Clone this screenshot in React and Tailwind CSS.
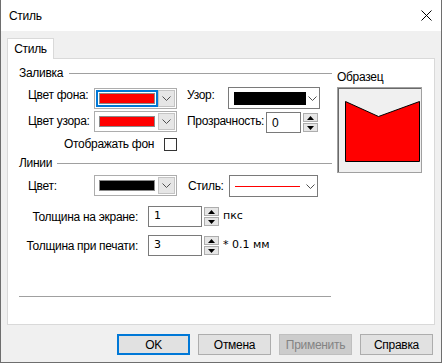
import React from "react";

const font = { fontFamily: '"Liberation Sans", Arial, sans-serif' };
const tahoma = { fontFamily: '"DejaVu Sans", sans-serif' };

function Chevron({ className = "" }) {
  return (
    <svg width="9" height="5" viewBox="0 0 9 5" className={className}>
      <path d="M0.5 0.5 L4.5 4.5 L8.5 0.5" fill="none" stroke="#505050" strokeWidth="1" />
    </svg>
  );
}

function ColorCombo({ color, focused }) {
  return (
    <div className="flex h-[21px] w-[83px] flex-none border border-[#adadad] bg-white p-[1px]">
      <div
        className={
          focused
            ? "flex-1 border-2 border-[#0078d7] p-[1px]"
            : "flex-1 p-[3px]"
        }
      >
        <div className="h-full w-full border border-[#8a8a8a]" style={{ background: color }} />
      </div>
      <div className="flex w-[17px] flex-none items-center justify-center border border-[#c4c4c4] bg-[#e6e6e6]">
        <Chevron />
      </div>
    </div>
  );
}

function FlatCombo({ width, children }) {
  return (
    <div className="flex h-[22px] flex-none items-center border border-[#7a7a7a] bg-white pl-[5px] pr-[2px]" style={{ width }}>
      <div className="flex-none">{children}</div>
      <Chevron className="ml-auto flex-none" />
    </div>
  );
}

function Spin({ value, width = 54, editW = 36, small }) {
  return (
    <div className="flex h-[21px] flex-none" style={{ width }}>
      <div
        className="flex flex-none items-center border border-[#7a7a7a] bg-white pl-[5px] text-black"
        style={{ width: editW, ...(small ? tahoma : {}), fontSize: small ? 11 : 12 }}
      >
        {value}
      </div>
      <div className="ml-[2px] flex w-[15px] flex-col gap-[1px] py-[1px]">
        <div className="flex flex-1 items-center justify-center border border-[#adadad] bg-[#e6e6e6]">
          <svg width="7" height="4" viewBox="0 0 7 4"><path d="M0 4 L3.5 0 L7 4 Z" fill="#000" /></svg>
        </div>
        <div className="flex flex-1 items-center justify-center border border-[#adadad] bg-[#e6e6e6]">
          <svg width="7" height="4" viewBox="0 0 7 4"><path d="M0 0 L3.5 4 L7 0 Z" fill="#000" /></svg>
        </div>
      </div>
    </div>
  );
}

function Header({ text, lineStart }) {
  return (
    <div className="flex h-[16px] items-center pl-[11px]">
      <span className="whitespace-nowrap leading-[16px]">{text}</span>
      <div className="h-px flex-1 bg-[#a0a0a0]" style={{ marginLeft: lineStart }} />
    </div>
  );
}

function Button({ children, primary, disabled }) {
  let cls = "flex h-[21px] w-[73px] items-center justify-center border text-[12px] ";
  if (primary) cls += "border-2 border-[#0078d7] bg-[#e1e1e1] text-black";
  else if (disabled) cls += "border-[#bfbfbf] bg-[#cccccc] text-[#838383]";
  else cls += "border-[#adadad] bg-[#e1e1e1] text-black";
  return <div className={cls}>{children}</div>;
}

export default function App() {
  return (
    <div className="flex h-[363px] w-[442px] flex-col whitespace-nowrap border-x border-b border-[#6e6e6e] bg-[#f0f0f0] text-[12px] tracking-[-0.3px] text-black" style={font}>
      <div className="flex h-[31px] flex-none items-center justify-between bg-white pl-[8px] pr-[9px]">
        <span>Стиль</span>
        <svg width="11" height="11" viewBox="0 0 11 11">
          <path d="M0.5 0.5 L10.5 10.5 M10.5 0.5 L0.5 10.5" stroke="#000" strokeWidth="1" />
        </svg>
      </div>

      <div className="flex flex-1 flex-col px-[6px] pt-[7px]">
        <div className="relative z-10 -mb-px flex h-[21px] w-[47px] items-center justify-center border border-b-0 border-[#d9d9d9] bg-white">
          Стиль
        </div>
        <div className="flex h-[267px] border border-[#d9d9d9] bg-white">
          <div className="flex w-[324px] flex-none flex-col pt-[6px]">
            <Header text="Заливка" lineStart={6} />

            <div className="mt-[6px] flex h-[22px] pl-[20px]">
              <span className="w-[66px] flex-none leading-[16px]">Цвет фона:</span>
              <div className="mt-[1px]"><ColorCombo color="#ff0000" focused /></div>
              <span className="ml-[10px] w-[41px] flex-none leading-[16px]">Узор:</span>
              <FlatCombo width={92}>
                <div className="h-[13px] w-[72px] bg-black" />
              </FlatCombo>
            </div>

            <div className="mt-[2px] flex h-[22px] pl-[20px]">
              <span className="mt-[2px] w-[66px] flex-none leading-[16px]">Цвет узора:</span>
              <ColorCombo color="#ff0000" />
              <span className="ml-[10px] mt-[2px] w-[79px] flex-none leading-[16px]">Прозрачность:</span>
              <div className="mt-[1px]"><Spin value="0" width={52} editW={35} /></div>
            </div>

            <div className="mt-[4px] flex h-[14px] items-center pl-[56px]">
              <span className="leading-[16px]">Отображать фон</span>
              <div className="ml-auto mr-[155px] h-[13px] w-[13px] border border-[#333333] bg-white" />
            </div>

            <div className="mt-[4px]">
              <Header text="Линии" lineStart={5} />
            </div>

            <div className="mt-[4px] flex h-[23px] pl-[20px]">
              <span className="mt-[3px] w-[66px] flex-none leading-[16px]">Цвет:</span>
              <ColorCombo color="#000000" />
              <span className="ml-[11px] mt-[3px] w-[41px] flex-none leading-[16px]">Стиль:</span>
              <FlatCombo width={89}>
                <div className="h-px w-[65px] bg-[#ff0000]" />
              </FlatCombo>
            </div>

            <div className="mt-[8px] flex h-[21px] items-center">
              <span className="w-[130px] flex-none text-right leading-[16px]">Толщина на экране:</span>
              <div className="ml-[10px]"><Spin value="1" width={71} editW={54} small /></div>
              <span className="ml-[4px] text-[11px] tracking-normal" style={tahoma}>пкс</span>
            </div>

            <div className="mt-[8px] flex h-[21px] items-center">
              <span className="w-[130px] flex-none text-right leading-[16px]">Толщина при печати:</span>
              <div className="ml-[10px]"><Spin value="3" width={71} editW={54} small /></div>
              <span className="ml-[4px] text-[11px] tracking-normal" style={tahoma}>* 0.1 мм</span>
            </div>

            <div className="ml-[11px] mt-[40px] h-px w-[312px] bg-[#a0a0a0]" />
          </div>

          <div className="ml-[5px] flex flex-col pt-[10px]">
            <span className="leading-[16px]">Образец</span>
            <div className="mt-[2px] h-[86px] w-[85px] border border-[#a0a0a0] bg-[#f0f0f0]">
              <div className="h-full w-full border-l border-t border-[#696969]">
                <svg width="83" height="84" viewBox="0 0 83 84">
                  <polygon points="6.5,12.5 39.5,27.5 80.5,12.5 80.5,72.5 6.5,72.5" fill="#ff0000" stroke="#000" strokeWidth="1" />
                </svg>
              </div>
            </div>
          </div>
        </div>

        <div className="mt-[9px] flex justify-end gap-[8px] pr-[2px]">
          <Button primary>OK</Button>
          <Button>Отмена</Button>
          <Button disabled>Применить</Button>
          <Button>Справка</Button>
        </div>
      </div>
    </div>
  );
}
